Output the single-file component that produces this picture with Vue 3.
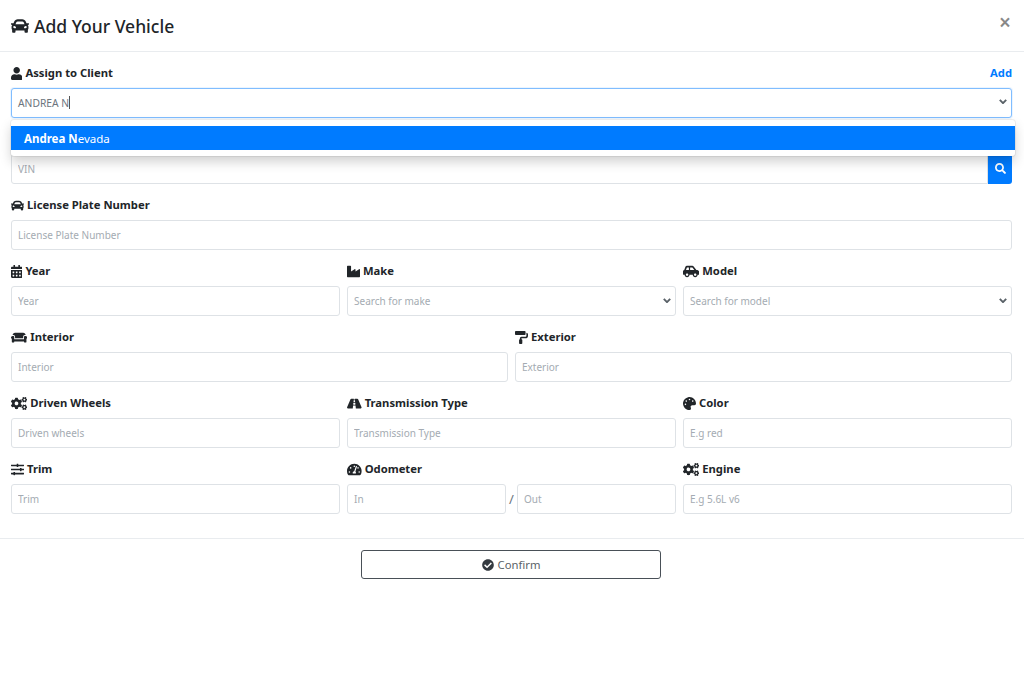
<script setup>
const paths = {
  car: ['0 0 512 512', 'M499.99 176h-59.87l-16.64-41.6C406.38 91.63 365.57 64 319.5 64h-127c-46.06 0-86.88 27.63-103.99 70.4L71.87 176H12.01C4.2 176-1.53 183.34.37 190.91l6 24C7.7 220.25 12.5 224 18.01 224h20.07C24.65 235.73 16 252.78 16 272v48c0 16.12 6.16 30.67 16 41.93V416c0 17.67 14.33 32 32 32h32c17.67 0 32-14.33 32-32v-32h256v32c0 17.67 14.33 32 32 32h32c17.67 0 32-14.33 32-32v-54.07c9.84-11.25 16-25.8 16-41.93v-48c0-19.22-8.65-36.27-22.07-48H494c5.51 0 10.31-3.75 11.64-9.09l6-24c1.89-7.57-3.84-14.91-11.65-14.91zm-352.06-17.83c7.29-18.22 24.94-30.17 44.57-30.17h127c19.63 0 37.28 11.95 44.57 30.17L384 208H128l19.93-49.83zM96 319.8c-19.2 0-32-12.76-32-31.9S76.8 256 96 256s48 28.71 48 47.85-28.8 15.95-48 15.95zm320 0c-19.2 0-48 3.19-48-15.95S396.8 256 416 256s32 12.76 32 31.9-12.8 31.9-32 31.9z'],
  user: ['0 0 448 512', 'M224 256c70.7 0 128-57.3 128-128S294.7 0 224 0 96 57.3 96 128s57.3 128 128 128zm89.6 32h-16.7c-22.2 10.2-46.9 16-72.9 16s-50.6-5.8-72.9-16h-16.7C60.2 288 0 348.2 0 422.4V464c0 26.5 21.5 48 48 48h352c26.5 0 48-21.5 48-48v-41.6c0-74.2-60.2-134.4-134.4-134.4z'],
  search: ['0 0 512 512', 'M505 442.7L405.3 343c-4.5-4.5-10.6-7-17-7H372c27.6-35.3 44-79.7 44-128C416 93.1 322.9 0 208 0S0 93.1 0 208s93.1 208 208 208c48.3 0 92.7-16.4 128-44v16.3c0 6.4 2.5 12.5 7 17l99.7 99.7c9.4 9.4 24.6 9.4 33.9 0l28.3-28.3c9.4-9.4 9.4-24.6.1-34zM208 336c-70.7 0-128-57.2-128-128 0-70.7 57.2-128 128-128 70.7 0 128 57.2 128 128 0 70.7-57.2 128-128 128z'],
  calendar: ['0 0 448 512', 'M0 464c0 26.5 21.5 48 48 48h352c26.5 0 48-21.5 48-48V192H0v272zm320-196c0-6.6 5.4-12 12-12h40c6.6 0 12 5.4 12 12v40c0 6.6-5.4 12-12 12h-40c-6.6 0-12-5.4-12-12v-40zm0 128c0-6.6 5.4-12 12-12h40c6.6 0 12 5.4 12 12v40c0 6.6-5.4 12-12 12h-40c-6.6 0-12-5.4-12-12v-40zM192 268c0-6.6 5.4-12 12-12h40c6.6 0 12 5.4 12 12v40c0 6.6-5.4 12-12 12h-40c-6.6 0-12-5.4-12-12v-40zm0 128c0-6.6 5.4-12 12-12h40c6.6 0 12 5.4 12 12v40c0 6.6-5.4 12-12 12h-40c-6.6 0-12-5.4-12-12v-40zM64 268c0-6.6 5.4-12 12-12h40c6.6 0 12 5.4 12 12v40c0 6.6-5.4 12-12 12H76c-6.6 0-12-5.4-12-12v-40zm0 128c0-6.6 5.4-12 12-12h40c6.6 0 12 5.4 12 12v40c0 6.6-5.4 12-12 12H76c-6.6 0-12-5.4-12-12v-40zM400 64h-48V16c0-8.8-7.2-16-16-16h-32c-8.8 0-16 7.2-16 16v48H160V16c0-8.8-7.2-16-16-16h-32c-8.8 0-16 7.2-16 16v48H48C21.5 64 0 85.5 0 112v48h448v-48c0-26.5-21.5-48-48-48z'],
  industry: ['0 0 512 512', 'M475.115 163.781L336 252.309v-68.28c0-18.916-20.931-30.399-36.885-20.248L160 252.309V56c0-13.255-10.745-24-24-24H24C10.745 32 0 42.745 0 56v400c0 13.255 10.745 24 24 24h464c13.255 0 24-10.745 24-24V184.029c0-18.917-20.931-30.399-36.885-20.248z'],
  carSide: ['0 0 640 512', 'M544 192h-16L419.22 56.02A64.025 64.025 0 0 0 369.24 32H155.33c-26.17 0-49.7 15.93-59.42 40.23L48 194.26C20.44 201.4 0 226.21 0 256v112c0 8.84 7.16 16 16 16h48c0 53.02 42.98 96 96 96s96-42.98 96-96h128c0 53.02 42.98 96 96 96s96-42.98 96-96h48c8.84 0 16-7.16 16-16v-80c0-53.02-42.98-96-96-96zM160 432c-26.47 0-48-21.53-48-48s21.53-48 48-48 48 21.53 48 48-21.53 48-48 48zm72-240H116.93l38.4-96H232v96zm48 0V96h89.24l76.8 96H280zm200 240c-26.47 0-48-21.53-48-48s21.53-48 48-48 48 21.53 48 48-21.53 48-48 48z'],
  couch: ['0 0 640 512', 'M160 224v64h320v-64c0-35.3 28.7-64 64-64h32c0-53-43-96-96-96H160c-53 0-96 43-96 96h32c35.3 0 64 28.7 64 64zm416-32h-32c-17.7 0-32 14.3-32 32v96H128v-96c0-17.7-14.3-32-32-32H64c-35.3 0-64 28.7-64 64 0 23.6 13 44 32 55.1V432c0 8.8 7.2 16 16 16h64c8.8 0 16-7.2 16-16v-16h384v16c0 8.8 7.2 16 16 16h64c8.8 0 16-7.2 16-16V311.1c19-11.1 32-31.5 32-55.1 0-35.3-28.7-64-64-64z'],
  roller: ['0 0 512 512', 'M416 128V32c0-17.67-14.33-32-32-32H32C14.33 0 0 14.33 0 32v96c0 17.67 14.33 32 32 32h352c17.67 0 32-14.33 32-32zm32-64v128c0 17.67-14.33 32-32 32H256c-35.35 0-64 28.65-64 64v32c-17.67 0-32 14.33-32 32v128c0 17.67 14.33 32 32 32h64c17.67 0 32-14.33 32-32V352c0-17.67-14.33-32-32-32v-32h160c53.02 0 96-42.98 96-96v-64c0-35.35-28.65-64-64-64z'],
  cogs: ['0 0 640 512', 'M512.1 191l-8.2 14.3c-3 5.3-9.4 7.5-15.1 5.4-11.8-4.4-22.6-10.7-32.1-18.6-4.6-3.8-5.8-10.5-2.8-15.7l8.2-14.3c-6.9-8-12.3-17.3-15.9-27.4h-16.5c-6 0-11.2-4.3-12.2-10.3-2-12-2.1-24.6 0-37.1 1-6 6.2-10.4 12.2-10.4h16.5c3.6-10.1 9-19.4 15.9-27.4l-8.2-14.3c-3-5.2-1.9-11.9 2.8-15.7 9.5-7.9 20.4-14.2 32.1-18.6 5.7-2.1 12.1.1 15.1 5.4l8.2 14.3c10.5-1.9 21.2-1.9 31.7 0L552 6.3c3-5.3 9.4-7.5 15.1-5.4 11.8 4.4 22.6 10.7 32.1 18.6 4.6 3.8 5.8 10.5 2.8 15.7l-8.2 14.3c6.9 8 12.3 17.3 15.9 27.4h16.5c6 0 11.2 4.3 12.2 10.3 2 12 2.1 24.6 0 37.1-1 6-6.2 10.4-12.2 10.4h-16.5c-3.6 10.1-9 19.4-15.9 27.4l8.2 14.3c3 5.2 1.9 11.9-2.8 15.7-9.5 7.9-20.4 14.2-32.1 18.6-5.7 2.1-12.1-.1-15.1-5.4l-8.2-14.3c-10.4 1.9-21.2 1.9-31.7 0zm-10.5-58.8c38.5 29.6 82.4-14.3 52.8-52.8-38.5-29.7-82.4 14.3-52.8 52.8zM386.3 286.1l33.7 16.8c10.1 5.8 14.5 18.1 10.5 29.1-8.9 24.2-26.4 46.4-42.6 65.8-7.4 8.9-20.2 11.1-30.3 5.3l-29.1-16.8c-16 13.7-34.6 24.6-54.9 31.7v33.6c0 11.6-8.3 21.6-19.7 23.6-24.6 4.2-50.4 4.4-75.9 0-11.5-2-20-11.9-20-23.6V418c-20.3-7.2-38.9-18-54.9-31.7L74 403c-10 5.8-22.9 3.6-30.3-5.3-16.2-19.4-33.3-41.6-42.2-65.7-4-10.9.4-23.2 10.5-29.1l33.3-16.8c-3.9-20.9-3.9-42.4 0-63.4L12 205.8c-10.1-5.8-14.6-18.1-10.5-29 8.9-24.2 26-46.4 42.2-65.8 7.4-8.9 20.2-11.1 30.3-5.3l29.1 16.8c16-13.7 34.6-24.6 54.9-31.7V57.1c0-11.5 8.2-21.5 19.6-23.5 24.6-4.2 50.5-4.4 76-.1 11.5 2 20 11.9 20 23.6v33.6c20.3 7.2 38.9 18 54.9 31.7l29.1-16.8c10-5.8 22.9-3.6 30.3 5.3 16.2 19.4 33.2 41.6 42.1 65.8 4 10.9.1 23.2-10 29.1l-33.7 16.8c3.9 21 3.9 42.5 0 63.5zm-117.6 21.1c59.2-77-28.7-164.9-105.7-105.7-59.2 77 28.7 164.9 105.7 105.7zm243.4 182.7l-8.2 14.3c-3 5.3-9.4 7.5-15.1 5.4-11.8-4.4-22.6-10.7-32.1-18.6-4.6-3.8-5.8-10.5-2.8-15.7l8.2-14.3c-6.9-8-12.3-17.3-15.9-27.4h-16.5c-6 0-11.2-4.3-12.2-10.3-2-12-2.1-24.6 0-37.1 1-6 6.2-10.4 12.2-10.4h16.5c3.6-10.1 9-19.4 15.9-27.4l-8.2-14.3c-3-5.2-1.9-11.9 2.8-15.7 9.5-7.9 20.4-14.2 32.1-18.6 5.7-2.1 12.1.1 15.1 5.4l8.2 14.3c10.5-1.9 21.2-1.9 31.7 0l8.2-14.3c3-5.3 9.4-7.5 15.1-5.4 11.8 4.4 22.6 10.7 32.1 18.6 4.6 3.8 5.8 10.5 2.8 15.7l-8.2 14.3c6.9 8 12.3 17.3 15.9 27.4h16.5c6 0 11.2 4.3 12.2 10.3 2 12 2.1 24.6 0 37.1-1 6-6.2 10.4-12.2 10.4h-16.5c-3.6 10.1-9 19.4-15.9 27.4l8.2 14.3c3 5.2 1.9 11.9-2.8 15.7-9.5 7.9-20.4 14.2-32.1 18.6-5.7 2.1-12.1-.1-15.1-5.4l-8.2-14.3c-10.4 1.9-21.2 1.9-31.7 0zM501.6 431c38.5 29.6 82.4-14.3 52.8-52.8-38.5-29.6-82.4 14.3-52.8 52.8z'],
  road: ['0 0 576 512', 'M573.19 402.67l-139.79-320C428.43 71.29 417.6 64 405.68 64h-97.59l2.45 23.16c.5 4.72-3.21 8.84-7.96 8.84h-29.16c-4.75 0-8.46-4.12-7.96-8.84L267.91 64h-97.59c-11.93 0-22.76 7.29-27.73 18.67L2.8 402.67C-6.45 423.86 8.31 448 30.54 448h196.84l10.31-97.68c.86-8.14 7.72-14.32 15.91-14.32h68.8c8.19 0 15.05 6.18 15.91 14.32L348.62 448h196.84c22.23 0 36.99-24.14 27.73-45.33zM260.4 135.16a8 8 0 0 1 7.96-7.16h39.29c4.09 0 7.53 3.09 7.96 7.16l4.6 43.58c.75 7.09-4.81 13.26-11.93 13.26h-40.54c-7.13 0-12.68-6.17-11.93-13.26l4.59-43.58zM315.64 304h-55.29c-9.5 0-16.91-8.23-15.91-17.68l5.07-48c.86-8.14 7.72-14.32 15.91-14.32h45.15c8.19 0 15.05 6.18 15.91 14.32l5.07 48c1 9.45-6.41 17.68-15.91 17.68z'],
  palette: ['0 0 512 512', 'M204.3 5C104.9 24.4 24.8 104.3 5.2 203.4c-37 187 131.7 326.4 258.8 306.7 41.2-6.4 61.4-54.6 42.5-91.7-23.1-45.4 9.9-98.4 60.9-98.4h79.7c35.8 0 64.8-29.6 64.9-65.3C511.5 97.1 368.1-26.9 204.3 5zM96 320c-17.7 0-32-14.3-32-32s14.3-32 32-32 32 14.3 32 32-14.3 32-32 32zm32-128c-17.7 0-32-14.3-32-32s14.3-32 32-32 32 14.3 32 32-14.3 32-32 32zm128-64c-17.7 0-32-14.3-32-32s14.3-32 32-32 32 14.3 32 32-14.3 32-32 32zm128 64c-17.7 0-32-14.3-32-32s14.3-32 32-32 32 14.3 32 32-14.3 32-32 32z'],
  sliders: ['0 0 512 512', 'M496 384H160v-16c0-8.8-7.2-16-16-16h-32c-8.8 0-16 7.2-16 16v16H16c-8.8 0-16 7.2-16 16v32c0 8.8 7.2 16 16 16h80v16c0 8.8 7.2 16 16 16h32c8.8 0 16-7.2 16-16v-16h336c8.8 0 16-7.2 16-16v-32c0-8.8-7.2-16-16-16zm0-160h-80v-16c0-8.8-7.2-16-16-16h-32c-8.8 0-16 7.2-16 16v16H16c-8.8 0-16 7.2-16 16v32c0 8.8 7.2 16 16 16h336v16c0 8.8 7.2 16 16 16h32c8.8 0 16-7.2 16-16v-16h80c8.8 0 16-7.2 16-16v-32c0-8.8-7.2-16-16-16zm0-160H288V48c0-8.8-7.2-16-16-16h-32c-8.8 0-16 7.2-16 16v16H16C7.2 64 0 71.2 0 80v32c0 8.8 7.2 16 16 16h208v16c0 8.8 7.2 16 16 16h32c8.8 0 16-7.2 16-16v-16h208c8.8 0 16-7.2 16-16V80c0-8.8-7.2-16-16-16z'],
  tacho: ['0 0 576 512', 'M288 32C128.94 32 0 160.94 0 320c0 52.8 14.25 102.26 39.06 144.8 5.61 9.62 16.3 15.2 27.44 15.2h443c11.14 0 21.83-5.58 27.44-15.2C561.75 422.26 576 372.8 576 320c0-159.06-128.94-288-288-288zm0 64c14.71 0 26.58 10.13 30.32 23.65-1.11 2.26-2.64 4.23-3.45 6.67l-9.22 27.67c-5.13 3.49-10.97 6.01-17.64 6.01-17.67 0-32-14.33-32-32S270.33 96 288 96zM96 384c-17.67 0-32-14.33-32-32s14.33-32 32-32 32 14.33 32 32-14.33 32-32 32zm48-160c-17.67 0-32-14.33-32-32s14.33-32 32-32 32 14.33 32 32-14.33 32-32 32zm246.77-72.41l-61.33 184C343.13 347.33 352 364.54 352 384c0 11.72-3.38 22.55-8.88 32H232.88c-5.5-9.45-8.88-20.28-8.88-32 0-33.94 26.5-61.43 59.9-63.59l61.34-184.01c4.17-12.56 17.73-19.45 30.36-15.17 12.57 4.19 19.35 17.79 15.17 30.36zm14.66 57.2l15.52-46.55c3.47-1.29 7.13-2.23 11.05-2.23 17.67 0 32 14.33 32 32s-14.33 32-32 32c-11.38-.01-20.89-6.28-26.57-15.22zM480 384c-17.67 0-32-14.33-32-32s14.33-32 32-32 32 14.33 32 32-14.33 32-32 32z'],
  check: ['0 0 512 512', 'M504 256c0 136.967-111.033 248-248 248S8 392.967 8 256 119.033 8 256 8s248 111.033 248 248zM227.314 387.314l184-184c6.248-6.248 6.248-16.379 0-22.627l-22.627-22.627c-6.248-6.249-16.379-6.249-22.628 0L216 308.118l-70.059-70.059c-6.248-6.248-16.379-6.248-22.628 0l-22.627 22.627c-6.248 6.248-6.248 16.379 0 22.627l104 104c6.249 6.25 16.379 6.25 22.628.001z']
}

const rows = [
  { cls: 'three', fields: [
    { icon: 'calendar', label: 'Year', ph: 'Year' },
    { icon: 'industry', label: 'Make', ph: 'Search for make', select: true },
    { icon: 'carSide', label: 'Model', ph: 'Search for model', select: true }
  ] },
  { cls: 'two', fields: [
    { icon: 'couch', label: 'Interior', ph: 'Interior' },
    { icon: 'roller', label: 'Exterior', ph: 'Exterior' }
  ] },
  { cls: 'three', fields: [
    { icon: 'cogs', label: 'Driven Wheels', ph: 'Driven wheels' },
    { icon: 'road', label: 'Transmission Type', ph: 'Transmission Type' },
    { icon: 'palette', label: 'Color', ph: 'E.g red' }
  ] },
  { cls: 'three', fields: [
    { icon: 'sliders', label: 'Trim', ph: 'Trim' },
    { icon: 'tacho', label: 'Odometer', odo: true },
    { icon: 'cogs', label: 'Engine', ph: 'E.g 5.6L v6' }
  ] }
]

const vb = (n) => paths[n][0]
const d = (n) => paths[n][1]
const w = (n) => {
  const p = paths[n][0].split(' ')
  return (Number(p[2]) / 512) * 13 + 'px'
}
</script>

<template>
  <div class="modal">
    <header class="head">
      <h1 class="title">
        <svg class="title-icon" viewBox="0 0 512 512"><path :d="d('car')" /></svg>
        Add Your Vehicle
      </h1>
      <span class="close">×</span>
    </header>

    <main class="body">
      <div class="group">
        <div class="label-row">
          <label class="label">
            <svg class="ic" :style="{ width: w('user') }" :viewBox="vb('user')"><path :d="d('user')" /></svg>
            Assign to Client
          </label>
          <a class="add">Add</a>
        </div>
        <div class="control focus">
          <span class="typed">ANDREA N</span><span class="caret"></span>
          <svg class="chev" viewBox="0 0 10 6"><path d="M1 1l4 4 4-4" /></svg>
        </div>
        <div class="menu">
          <div class="option"><b>Andrea N</b>evada</div>
        </div>
      </div>

      <div class="group">
        <label class="label">
          <svg class="ic" :style="{ width: w('car') }" :viewBox="vb('car')"><path :d="d('car')" /></svg>
          VIN
        </label>
        <div class="vin">
          <input class="control vin-input" placeholder="VIN" />
          <button class="search">
            <svg viewBox="0 0 512 512"><path :d="d('search')" /></svg>
          </button>
        </div>
      </div>

      <div class="group">
        <label class="label">
          <svg class="ic" :style="{ width: w('car') }" :viewBox="vb('car')"><path :d="d('car')" /></svg>
          License Plate Number
        </label>
        <input class="control" placeholder="License Plate Number" />
      </div>

      <div v-for="(row, i) in rows" :key="i" class="row" :class="row.cls">
        <div v-for="f in row.fields" :key="f.label" class="group">
          <label class="label">
            <svg class="ic" :style="{ width: w(f.icon) }" :viewBox="vb(f.icon)"><path :d="d(f.icon)" /></svg>
            {{ f.label }}
          </label>
          <div v-if="f.odo" class="odo">
            <input class="control" placeholder="In" />
            <span class="slash">/</span>
            <input class="control" placeholder="Out" />
          </div>
          <div v-else-if="f.select" class="select-wrap">
            <input class="control" :placeholder="f.ph" />
            <svg class="chev" viewBox="0 0 10 6"><path d="M1 1l4 4 4-4" /></svg>
          </div>
          <input v-else class="control" :placeholder="f.ph" />
        </div>
      </div>
    </main>

    <footer class="foot">
      <button class="confirm">
        <svg viewBox="0 0 512 512"><path :d="d('check')" /></svg>
        Confirm
      </button>
    </footer>
  </div>
</template>

<style>
html, body { margin: 0; background: #fff; }
</style>

<style scoped>
.modal {
  font-family: "Noto Sans", "Open Sans", sans-serif;
  color: #212529;
  width: 1024px;
  height: 693px;
  background: #fff;
  overflow: hidden;
}
.head {
  height: 51px;
  border-bottom: 1px solid #e9ecef;
  display: flex;
  align-items: flex-start;
  justify-content: space-between;
  padding: 0 11px;
}
.title {
  margin: 14px 0 0;
  font-size: 17.5px;
  line-height: 24px;
  font-weight: 500;
  display: flex;
  align-items: center;
  gap: 5px;
  color: #212529;
}
.title-icon { width: 18px; height: 18px; fill: #212529; }
.close {
  font-size: 21px;
  font-weight: 600;
  line-height: 21px;
  color: #888;
  margin: 12px 2px 0 0;
}
.body { padding: 12.25px 12px 0 11px; }
.group { position: relative; margin-bottom: 12.75px; min-width: 0; }
.label-row { display: flex; justify-content: space-between; }
.label {
  display: flex;
  align-items: center;
  gap: 3px;
  height: 18px;
  margin-bottom: 6px;
  font-size: 11.25px;
  line-height: 18px;
  font-weight: 700;
  color: #212529;
}
.ic { height: 13px; fill: #212529; flex: none; }
.add { font-size: 11.25px; font-weight: 700; line-height: 18px; color: #007bff; }
.control {
  display: block;
  box-sizing: border-box;
  width: 100%;
  height: 29.25px;
  padding: 1px 6px 0;
  border: 1px solid #dee2e6;
  border-radius: 3px;
  background: #fff;
  font: inherit;
  font-size: 10px;
  color: #495057;
  outline: none;
}
.control::placeholder { color: #a4abb2; opacity: 1; }
.focus {
  position: relative;
  display: flex;
  align-items: center;
  padding-top: 0;
  border-color: #80bdff;
  box-shadow: 0 0 0 1px rgba(0, 123, 255, 0.08);
}
.typed { color: #6c757d; font-size: 10.3px; }
.caret { width: 1px; height: 13px; background: #555; margin-left: 0; }
.chev {
  position: absolute;
  right: 5px;
  top: 12px;
  width: 8px;
  height: 5px;
  fill: none;
  stroke: #5a6268;
  stroke-width: 2.4;
}
.focus .chev { right: 4px; top: 10px; }
.menu {
  position: absolute;
  z-index: 5;
  left: 0;
  top: 56px;
  width: 1004px;
  box-sizing: border-box;
  padding: 6px 0;
  background: #fff;
  border-radius: 3px;
  box-shadow: 0 0 0 1px rgba(0, 0, 0, 0.06), 0 6px 12px rgba(0, 0, 0, 0.18);
}
.option {
  height: 24px;
  line-height: 25px;
  padding-left: 13px;
  background: #007bff;
  color: #fff;
  font-size: 11.5px;
}
.option b { font-weight: 700; }
.vin { display: flex; }
.vin-input { flex: 1; border-radius: 3px 0 0 3px; }
.search {
  width: 24px;
  height: 29.25px;
  padding: 0;
  border: 0;
  border-radius: 0 3px 3px 0;
  background: #007bff;
  display: flex;
  align-items: center;
  justify-content: center;
}
.search svg { width: 11px; height: 11px; fill: #fff; }
.row { display: grid; column-gap: 7px; }
.three { grid-template-columns: repeat(3, 1fr); }
.two { grid-template-columns: repeat(2, 1fr); }
.select-wrap { position: relative; }
.odo { display: flex; align-items: center; }
.odo .control { flex: none; width: 159px; }
.slash { width: 11px; text-align: center; font-size: 13px; color: #6c757d; }
.foot {
  margin-top: 12px;
  padding: 11px 2px 0 0;
  border-top: 1px solid #e9ecef;
  display: flex;
  justify-content: center;
}
.confirm {
  width: 300px;
  height: 29px;
  border: 1px solid #495057;
  border-radius: 3px;
  background: #fff;
  font: inherit;
  font-size: 11.25px;
  color: #5a6268;
  display: flex;
  align-items: center;
  justify-content: center;
  gap: 4px;
}
.confirm svg { width: 12px; height: 12px; fill: #343a40; }
</style>
